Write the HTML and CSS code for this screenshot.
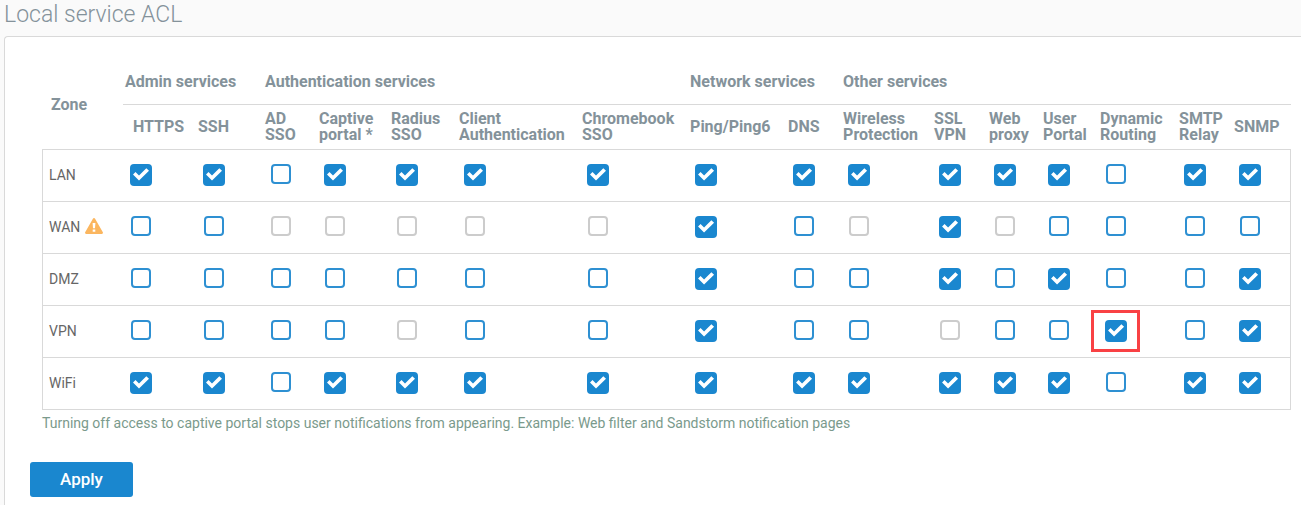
FILE: index.html
```html
<!DOCTYPE html>
<html lang="en">
<head>
    <meta charset="UTF-8">
    <meta name="viewport" content="width=device-width, initial-scale=1.0">
    <title>Local service ACL</title>
    <link rel="stylesheet" href="styles.css">
</head>
<body>
    <h1>Local service ACL</h1>
    <form class="panel">
        <table class="acl">
            <colgroup>
                <col class="w81"><col class="w73"><col class="w67"><col class="w54"><col class="w72">
                <col class="w68"><col class="w123"><col class="w108"><col class="w98"><col class="w55">
                <col class="w91"><col class="w55"><col class="w54"><col class="w57"><col class="w79">
                <col class="w55"><col class="w59">
            </colgroup>
            <thead>
                <tr class="groups">
                    <th class="zone-head" rowspan="2">Zone</th>
                    <th colspan="2">Admin services</th>
                    <th colspan="5">Authentication services</th>
                    <th colspan="2">Network services</th>
                    <th colspan="7">Other services</th>
                </tr>
                <tr class="services">
                    <th class="https">HTTPS</th>
                    <th>SSH</th>
                    <th>AD<br>SSO</th>
                    <th>Captive<br>portal *</th>
                    <th>Radius<br>SSO</th>
                    <th>Client<br>Authentication</th>
                    <th>Chromebook<br>SSO</th>
                    <th>Ping/Ping6</th>
                    <th>DNS</th>
                    <th>Wireless<br>Protection</th>
                    <th>SSL<br>VPN</th>
                    <th>Web<br>proxy</th>
                    <th>User<br>Portal</th>
                    <th>Dynamic<br>Routing</th>
                    <th>SMTP<br>Relay</th>
                    <th>SNMP</th>
                </tr>
            </thead>
            <tbody id="zones"></tbody>
        </table>
        <p class="note">Turning off access to captive portal stops user notifications from appearing. Example: Web filter and Sandstorm notification pages</p>
        <button type="submit" class="apply">Apply</button>
    </form>

    <template id="warning">
        <svg class="warning" viewBox="0 0 18 16" role="img" aria-label="Warning">
            <path fill="#fbb65f" d="M7.9.7a1.3 1.3 0 0 1 2.2 0l7.6 13.2a1.3 1.3 0 0 1-1.1 2.1H1.4a1.3 1.3 0 0 1-1.1-2.1z"/>
            <path fill="#fff" d="M7.6 5h2.8l-.4 5.2H8zM7.7 11.4h2.6v2.4H7.7z"/>
        </svg>
    </template>

    <script>
        const services = ['HTTPS', 'SSH', 'AD SSO', 'Captive portal', 'Radius SSO', 'Client Authentication',
            'Chromebook SSO', 'Ping/Ping6', 'DNS', 'Wireless Protection', 'SSL VPN', 'Web proxy',
            'User Portal', 'Dynamic Routing', 'SMTP Relay', 'SNMP'];

        // x = allowed, o = not allowed, - = not available for the zone
        const zones = [
            { name: 'LAN', access: 'xxoxxxxxxxxxxoxx' },
            { name: 'WAN', access: 'oo-----xo-x-oooo', warning: true },
            { name: 'DMZ', access: 'oooooooxooxoxoox' },
            { name: 'VPN', access: 'oooo-ooxoo-ooxox', highlight: 13 },
            { name: 'WiFi', access: 'xxoxxxxxxxxxxoxx' }
        ];

        const body = document.getElementById('zones');
        const warning = document.getElementById('warning');

        zones.forEach(zone => {
            const row = body.insertRow();
            const head = document.createElement('th');
            head.scope = 'row';
            head.textContent = zone.name;
            if (zone.warning) {
                head.appendChild(warning.content.cloneNode(true));
            }
            row.appendChild(head);

            services.forEach((service, i) => {
                const cell = row.insertCell();
                const box = document.createElement('input');
                box.type = 'checkbox';
                box.checked = zone.access[i] === 'x';
                box.disabled = zone.access[i] === '-';
                box.setAttribute('aria-label', `${zone.name} ${service}`);
                cell.appendChild(box);
                if (zone.highlight === i) {
                    cell.classList.add('highlight');
                }
            });
        });
    </script>
</body>
</html>
```
FILE: styles.css
```css
*,
*::before,
*::after {
    box-sizing: border-box;
}

body {
    margin: 0;
    background: #fafafa;
    color: #666;
    font-family: Roboto, "Liberation Sans", sans-serif;
    font-size: 14px;
    overflow-x: hidden;
}

h1 {
    margin: 0;
    padding: 0 4px;
    height: 36px;
    color: #84929a;
    font-size: 23px;
    font-weight: 300;
    line-height: 30px;
}

.panel {
    min-height: calc(100vh - 36px);
    margin-left: 4px;
    padding: 21px 10px 8px 37px;
    background: #fff;
    border: 1px solid #d9d9d9;
    border-width: 1px 0 0 1px;
    border-radius: 4px 0 0 0;
}

.acl {
    width: 100%;
    table-layout: fixed;
    border-collapse: separate;
    border-spacing: 0;
}

.w54 { width: 54px; }
.w55 { width: 55px; }
.w57 { width: 57px; }
.w59 { width: 59px; }
.w67 { width: 67px; }
.w68 { width: 68px; }
.w72 { width: 72px; }
.w73 { width: 73px; }
.w79 { width: 79px; }
.w81 { width: 81px; }
.w91 { width: 91px; }
.w98 { width: 98px; }
.w108 { width: 108px; }
.w123 { width: 123px; }

.acl th {
    padding: 0 0 0 2px;
    text-align: left;
    white-space: nowrap;
}

.acl thead th {
    color: #84929a;
    font-size: 16px;
    font-weight: 700;
    line-height: 16px;
    border-bottom: 1px solid #d9d9d9;
}

.acl .groups th {
    height: 47px;
    padding-top: 2px;
}

.services th {
    height: 45px;
}

.acl .zone-head {
    padding-left: 9px;
}

.acl .https {
    padding-left: 10px;
}

.acl tbody th,
.acl tbody td {
    height: 52px;
    padding-bottom: 2px;
    border-bottom: 1px solid #d9d9d9;
}

.acl tbody th {
    padding-left: 6px;
    border-left: 1px solid #d9d9d9;
    font-weight: 400;
}

.acl tbody td {
    padding: 0 0 2px 7px;
}

.acl tbody td:last-child {
    border-right: 1px solid #d9d9d9;
}

.warning {
    width: 18px;
    height: 16px;
    margin-left: 1px;
    vertical-align: -2px;
}

input[type="checkbox"] {
    appearance: none;
    display: block;
    width: 20px;
    height: 20px;
    margin: 0 1px 2px;
    background: #fff;
    border: 2px solid #2e90d2;
    border-radius: 4px;
}

input[type="checkbox"]:disabled {
    border-color: #ccc;
}

input[type="checkbox"]:checked {
    width: 22px;
    height: 22px;
    margin: 0;
    background: #1a87cf;
    border: 0;
}

input[type="checkbox"]:checked::before {
    content: "";
    display: block;
    width: 22px;
    height: 22px;
    background: #fff;
    clip-path: path("M3 11 5.5 8.5 9 11.9 16.3 4.7 19 7.3 9 17z");
}

.highlight {
    position: relative;
}

.highlight::after {
    content: "";
    position: absolute;
    top: 4px;
    left: -7px;
    width: 49px;
    height: 42px;
    border: 3px solid #f94144;
    pointer-events: none;
}

.note {
    margin: 4px 0 0;
    color: #7a9a8c;
    line-height: 18px;
}

.apply {
    display: block;
    width: 103px;
    height: 35px;
    margin: 30px 0 0 -12px;
    padding: 0 0 2px;
    background: #1a87cf;
    border: 0;
    border-radius: 3px;
    color: #fff;
    font-family: inherit;
    font-size: 17px;
    font-weight: 500;
}
```
